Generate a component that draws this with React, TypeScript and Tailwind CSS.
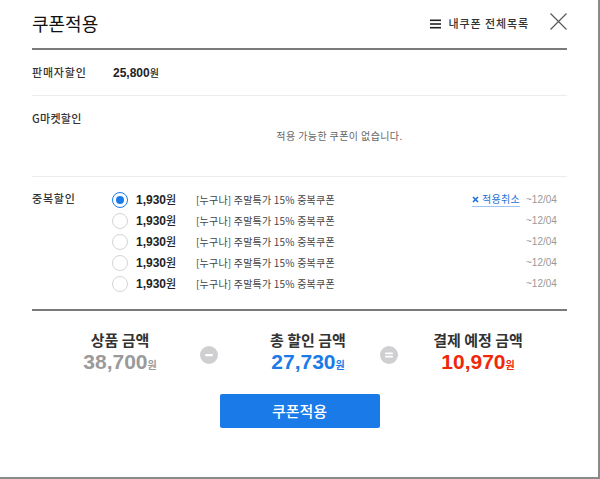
import React from "react";

const KR = { fontFamily: "'Noto Sans CJK KR', 'Noto Sans', sans-serif" };
const NUM = { fontFamily: "'Liberation Sans', 'Noto Sans CJK KR', sans-serif" };

const coupons = [
  { amount: "1,930", checked: true },
  { amount: "1,930", checked: false },
  { amount: "1,930", checked: false },
  { amount: "1,930", checked: false },
  { amount: "1,930", checked: false },
];

function Radio({ checked }: { checked: boolean }) {
  return (
    <span
      className={`flex h-[16px] w-[16px] items-center justify-center rounded-full border ${
        checked ? "border-[#1a7be8]" : "border-[#d4d4d4]"
      } bg-white`}
    >
      {checked && <span className="h-[8px] w-[8px] rounded-full bg-[#1a7be8]" />}
    </span>
  );
}

function OpIcon({ kind }: { kind: "minus" | "equal" }) {
  return (
    <svg width="18" height="18" viewBox="0 0 18 18">
      <circle cx="9" cy="9" r="9" fill="#cfcfd2" />
      {kind === "minus" ? (
        <rect x="5" y="8" width="8" height="2.2" rx="1" fill="#fff" />
      ) : (
        <>
          <rect x="5" y="6.5" width="8" height="1.8" rx="0.9" fill="#fff" />
          <rect x="5" y="9.8" width="8" height="1.8" rx="0.9" fill="#fff" />
        </>
      )}
    </svg>
  );
}

export default function App() {
  return (
    <div className="h-[479px] w-[600px] bg-white" style={KR}>
      <div className="h-[479px] w-[600px] border-b-2 border-r-2 border-[#8a8a8a] bg-white pl-[32px] pr-[31px]">
        {/* header */}
        <div className="flex h-[50px] items-center border-b-2 border-[#7a7a7a] pb-[2px]">
          <h1 className="text-[18px] font-normal leading-none text-[#111]">쿠폰적용</h1>
          <div className="ml-auto flex items-center">
            <svg width="11" height="10" viewBox="0 0 11 10" className="mr-[7px] mt-[2px]">
              <rect x="0" y="0.5" width="11" height="1.6" fill="#222" />
              <rect x="0" y="4.2" width="11" height="1.6" fill="#222" />
              <rect x="0" y="7.9" width="11" height="1.6" fill="#222" />
            </svg>
            <span className="text-[11px] font-medium tracking-[0.9px] text-[#333]">내쿠폰 전체목록</span>
            <svg width="17" height="17" viewBox="0 0 17 17" className="ml-[21px] mb-[3px]">
              <path d="M0.5 0.5 L16.5 16.5 M16.5 0.5 L0.5 16.5" stroke="#555" strokeWidth="1.1" fill="none" />
            </svg>
          </div>
        </div>

        {/* seller discount */}
        <div className="flex h-[46px] items-center border-b border-[#ececec]">
          <span className="w-[81px] text-[11px] font-medium tracking-[0.8px] text-[#333]">판매자할인</span>
          <span className="text-[12px] font-bold text-[#222]" style={NUM}>
            25,800<span className="text-[10px] font-medium" style={KR}>원</span>
          </span>
        </div>

        {/* gmarket discount */}
        <div className="h-[81px] border-b border-[#ececec] pt-[14px]">
          <div className="text-[11px] font-medium tracking-[0.3px] text-[#333]">G마켓할인</div>
          <div className="mt-[1px] pl-[80px] text-center text-[10px] tracking-[0.4px] text-[#666]">
            적용 가능한 쿠폰이 없습니다.
          </div>
        </div>

        {/* duplicate discount */}
        <div className="flex h-[134px] border-b-2 border-[#7a7a7a] pt-[12px]">
          <span className="w-[80px] pt-[1px] text-[11px] font-medium tracking-[0.8px] text-[#333]">중복할인</span>
          <div className="flex flex-1 flex-col pr-[8px]">
            {coupons.map((c, i) => (
              <div key={i} className="flex h-[21px] items-center">
                <Radio checked={c.checked} />
                <span className="ml-[8px] w-[60px] text-[12px] font-bold text-[#222]" style={NUM}>
                  {c.amount}
                  <span className="text-[11px] font-medium" style={KR}>원</span>
                </span>
                <span className="text-[10px] tracking-[0.2px] text-[#444]">[누구나] 주말특가 15% 중복쿠폰</span>
                <span className="ml-auto flex items-center">
                  {c.checked && (
                    <span className="mr-[6px] flex items-center border-b border-[#9ec4f2] text-[10px] leading-[14px] tracking-[0.3px] text-[#1a6fd8]">
                      <svg width="7" height="7" viewBox="0 0 7 7" className="mr-[3px]">
                        <path d="M1 1 L6 6 M6 1 L1 6" stroke="#1a6fd8" strokeWidth="1.6" />
                      </svg>
                      적용취소
                    </span>
                  )}
                  <span className="w-[33px] text-[10px] text-[#999]" style={NUM}>
                    ~12/04
                  </span>
                </span>
              </div>
            ))}
          </div>
        </div>

        {/* summary */}
        <div className="flex items-center pl-[13px] pt-[19px]">
          <div className="w-[150px] text-center">
            <div className="text-[15px] font-bold leading-[20px] text-[#333]">상품 금액</div>
            <div className="text-[21px] font-bold leading-[24px] text-[#9a9a9a]" style={NUM}>
              38,700<span className="text-[10px]" style={KR}>원</span>
            </div>
          </div>
          <div className="ml-[5px] mt-[2px]">
            <OpIcon kind="minus" />
          </div>
          <div className="ml-[18px] w-[144px] text-center">
            <div className="text-[15px] font-bold leading-[20px] text-[#333]">총 할인 금액</div>
            <div className="text-[21px] font-bold leading-[24px] text-[#1a7be8]" style={NUM}>
              27,730<span className="text-[10px]" style={KR}>원</span>
            </div>
          </div>
          <div className="mt-[2px]">
            <OpIcon kind="equal" />
          </div>
          <div className="w-[160px] text-center">
            <div className="text-[15px] font-bold leading-[20px] text-[#333]">결제 예정 금액</div>
            <div className="text-[21px] font-bold leading-[24px] text-[#f0280a]" style={NUM}>
              10,970<span className="text-[10px]" style={KR}>원</span>
            </div>
          </div>
        </div>

        <div className="mt-[17px] flex justify-center">
          <button className="h-[34px] w-[160px] rounded-[2px] bg-[#1a7be8] text-[15px] font-medium text-white">
            쿠폰적용
          </button>
        </div>
      </div>
    </div>
  );
}
